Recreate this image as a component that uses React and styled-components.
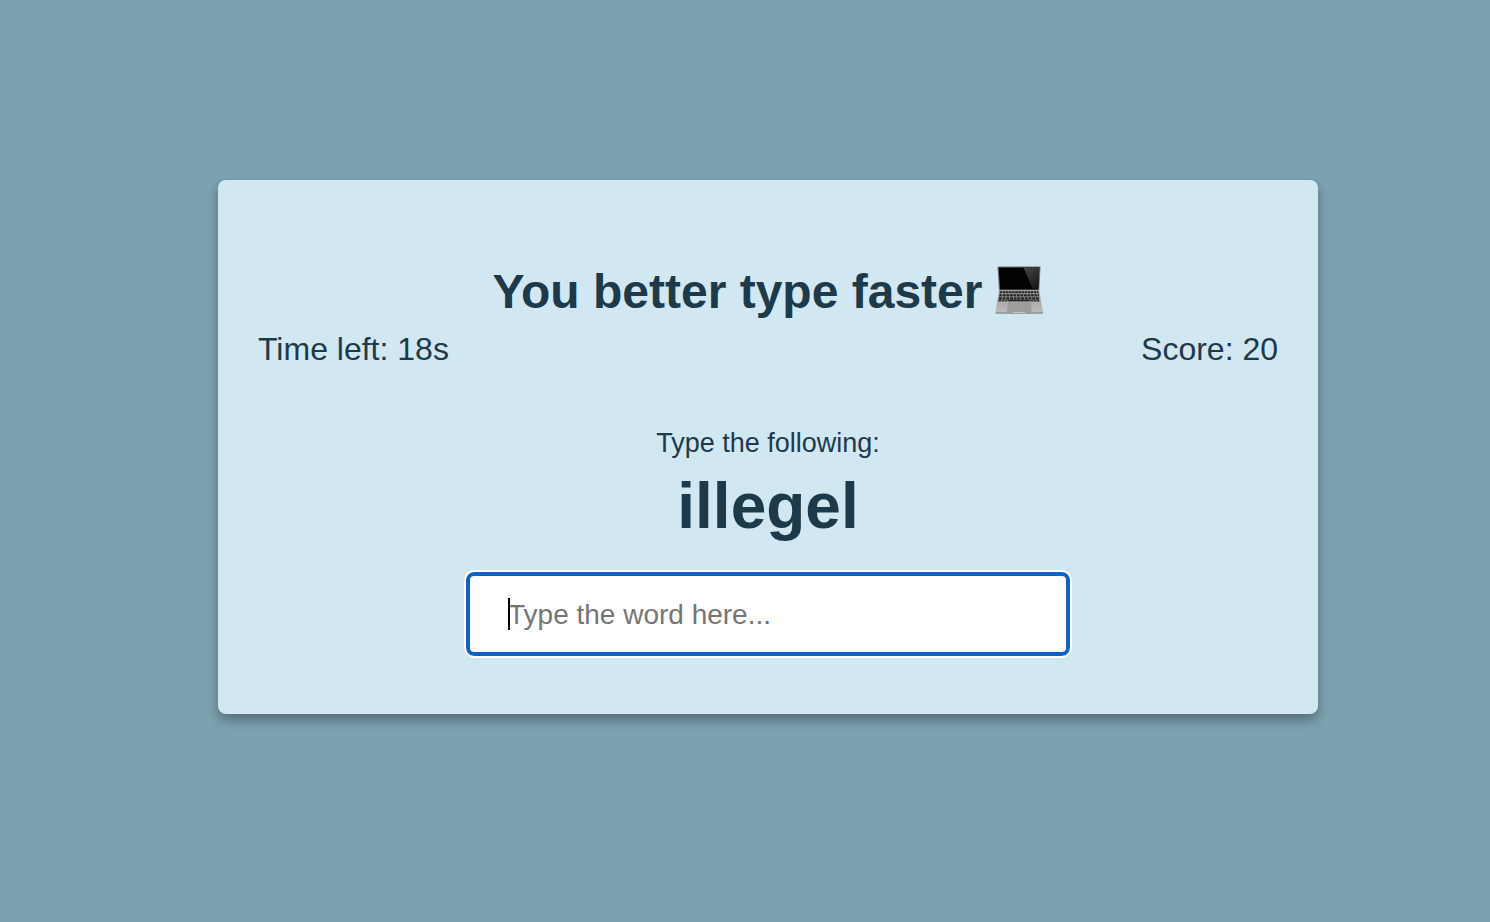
import React, { useState } from "react";
import styled, { createGlobalStyle } from "styled-components";

const GlobalStyle = createGlobalStyle`
  *, *::before, *::after { box-sizing: border-box; }
  body {
    margin: 0;
    background: #7ca2b0;
    color: #1d3a4a;
    font-family: "Liberation Sans", Arial, sans-serif;
  }
`;

const Page = styled.main`
  min-height: 100vh;
  padding: 0 0 28px 46px;
  display: flex;
  align-items: center;
  justify-content: center;
`;

const Card = styled.section`
  width: 100%;
  max-width: 1100px;
  padding: 84px 40px 58px;
  border-radius: 8px;
  background: #d1e7f1;
  box-shadow: 0 6px 12px rgba(0, 0, 0, 0.32);
  display: flex;
  flex-direction: column;
  align-items: center;
`;

const Title = styled.h1`
  margin: 0;
  display: flex;
  align-items: center;
  gap: 13px;
  font-size: 48px;
  line-height: 56px;
  font-weight: 700;
`;

const LaptopIcon = styled.svg`
  width: 48px;
  height: 48px;
  margin-bottom: 4px;
  flex: none;
`;

const Stats = styled.div`
  width: 100%;
  margin-top: 11px;
  display: flex;
  justify-content: space-between;
  font-size: 32px;
  line-height: 36px;
`;

const Stat = styled.p`
  margin: 0;
`;

const Prompt = styled.label`
  margin-top: 60px;
  font-size: 27px;
  line-height: 32px;
`;

const Word = styled.h2`
  margin: 11px 0 30px;
  font-size: 64px;
  line-height: 72px;
  font-weight: 700;
`;

const Field = styled.div`
  position: relative;
  width: 100%;
  max-width: 604px;
`;

const WordInput = styled.input`
  display: block;
  width: 100%;
  height: 84px;
  padding: 2px 38px 0;
  border: 4px solid #1060cc;
  border-radius: 8px;
  outline: 2px solid #ffffff;
  background: #ffffff;
  color: #1d3a4a;
  caret-color: transparent;
  font-family: inherit;
  font-size: 28px;

  &::placeholder {
    color: #757575;
    opacity: 1;
  }
`;

const Caret = styled.span`
  position: absolute;
  left: 42px;
  top: 26px;
  width: 2px;
  height: 32px;
  background: #000000;
  pointer-events: none;
`;

function Laptop() {
  return (
    <LaptopIcon viewBox="0 0 48 48" role="img" aria-label="Laptop">
      <defs>
        <linearGradient id="glare" x1="0" y1="0" x2="0.6" y2="1">
          <stop offset="0" stopColor="#484848" />
          <stop offset="1" stopColor="#1a1a1a" />
        </linearGradient>
        <linearGradient id="deck" x1="0" y1="0" x2="0" y2="1">
          <stop offset="0" stopColor="#9c9c9c" />
          <stop offset="1" stopColor="#bcbcbc" />
        </linearGradient>
      </defs>
      <path d="M3.2.4h41.6q.8 0 .7.8L44.2 24.6H4L2.5 1.2q0-.8.7-.8z" fill="#6f6c6b" />
      <path d="M3.7 1.5h40.6L43.2 23.6H5z" fill="#020202" />
      <path d="M28.5 1.5h15.8L43.3 21.5 38 23.6z" fill="url(#glare)" />
      <path d="M4 24.3h40.2L48 46.5H.4z" fill="url(#deck)" />
      <path d="M4.8 26.2h38.7" stroke="#252525" strokeWidth="2" strokeDasharray="2.5 .6" />
      <path d="M4.4 29.3h39.6" stroke="#252525" strokeWidth="2.3" strokeDasharray="2.9 .6" />
      <path d="M3.8 32.5h40.8" stroke="#252525" strokeWidth="2.4" strokeDasharray="3.1 .6" />
      <path d="M3.4 34.8h9m23 0h9.6" stroke="#333333" strokeWidth="1.4" strokeDasharray="2.6 .6" />
      <path d="M13.2 34.6h21.6" stroke="#252525" strokeWidth="1.6" />
      <path d="M13 37h22.6l.5 8.8H12.4z" fill="#9d9d9d" stroke="#8a8a8a" strokeWidth=".4" />
      <path d="M.4 46.3H48v.7q0 .8-1 .8H2q-1.6 0-1.6-.8z" fill="#8c8c8c" />
      <path d="M17.5 46.3h13l-.8.8H18.3z" fill="#d0d0d0" />
    </LaptopIcon>
  );
}

export default function App() {
  const [value, setValue] = useState("");

  return (
    <>
      <GlobalStyle />
      <Page>
        <Card>
          <Title>
            You better type faster
            <Laptop />
          </Title>
          <Stats>
            <Stat>Time left: 18s</Stat>
            <Stat>Score: 20</Stat>
          </Stats>
          <Prompt htmlFor="word">Type the following:</Prompt>
          <Word>illegel</Word>
          <Field>
            <WordInput
              id="word"
              type="text"
              autoFocus
              autoComplete="off"
              placeholder="Type the word here..."
              value={value}
              onChange={(event) => setValue(event.target.value)}
            />
            {value === "" && <Caret />}
          </Field>
        </Card>
      </Page>
    </>
  );
}
